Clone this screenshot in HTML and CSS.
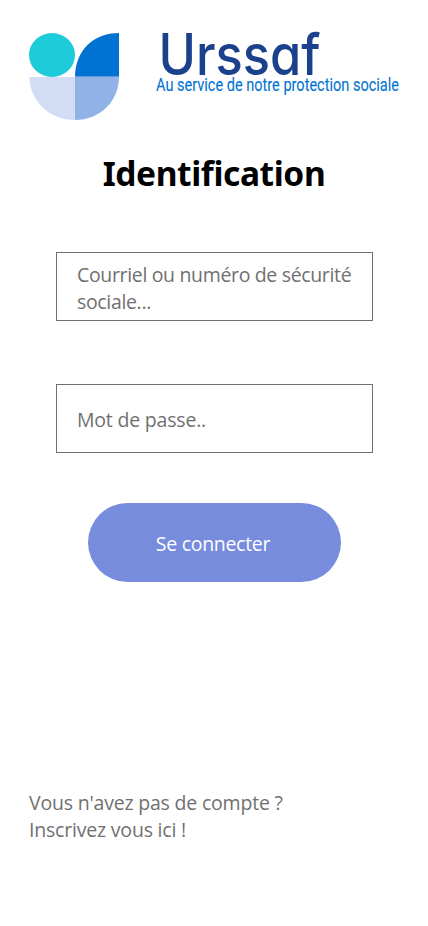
FILE: index.html
```html
<!DOCTYPE html>
<html lang="fr">
<head>
<meta charset="utf-8">
<meta name="viewport" content="width=device-width, initial-scale=1">
<title>Urssaf - Identification</title>
<link rel="stylesheet" href="styles.css">
</head>
<body>
<main class="screen">
  <header class="brand">
    <svg class="mark" viewBox="0 0 90 87" preserveAspectRatio="none" aria-hidden="true">
      <ellipse cx="23" cy="22" rx="23" ry="22" fill="#1dccd8"/>
      <path d="M90 0V44H46C46 18 64 0 90 0Z" fill="#0072d2"/>
      <path d="M.5 44H46V87C20 87 1 68 .5 44Z" fill="#d2ddf5"/>
      <path d="M46 44H90C90 68 71 87 46 87Z" fill="#91b2e6"/>
      <path d="M46 43.5H90" stroke="#5d9cdc"/>
    </svg>
    <svg class="wordmark" viewBox="0 0 248 74" aria-label="Urssaf">
      <text class="name" x="2.5" y="45" textLength="162" lengthAdjust="spacingAndGlyphs">Urssaf</text>
      <text class="motto" x="0" y="61" textLength="243" lengthAdjust="spacingAndGlyphs">Au service de notre protection sociale</text>
    </svg>
  </header>
  <h1 class="title">Identification</h1>
  <form class="form">
    <div class="field long">Courriel ou numéro de sécurité sociale...</div>
    <div class="field">Mot de passe..</div>
    <button class="submit" type="button">Se connecter</button>
  </form>
  <p class="signup">Vous n'avez pas de compte ?<br>Inscrivez vous ici !</p>
</main>
</body>
</html>
```
FILE: styles.css
```css
* { box-sizing: border-box; }
body { margin: 0; background: #fff; font: 19.5px/27px "Open Sans", "Noto Sans", sans-serif; letter-spacing: -.2px; }
.screen { width: 428px; height: 926px; overflow: hidden; }
.brand { display: flex; gap: 37px; padding: 33px 0 0 29px; height: 120px; }
.mark { display: block; flex: none; width: 90px; height: 87px; }
.wordmark { display: block; flex: none; width: 248px; height: 74px; margin-top: -3px; overflow: visible; letter-spacing: 0; }
.name { font: 450 57px Inter, sans-serif; font-feature-settings: "cv11" 1; fill: #1b418c; }
.motto { font: 400 19px Roboto, sans-serif; fill: #0072d2; stroke: #0072d2; stroke-width: .1px; }
.title { margin: 29px 0 0; height: 49px; font: 700 33.5px/48px "Noto Sans", sans-serif; letter-spacing: -.4px; color: #000; text-align: center; white-space: nowrap; }
.form { display: flex; flex-direction: column; align-items: center; padding: 54px 0 0; }
.field { display: flex; align-items: center; width: 317px; height: 69px; margin: 0 0 63px 1px; padding: 2px 15px 0 20px; border: 1px solid #707070; color: #707070; }
.long { letter-spacing: -.34px; }
.submit { width: 253px; height: 79px; margin: -13px 0 0 1px; padding: 2px 3px 0 0; border: 0; border-radius: 40px; background: #788cde; color: #fff; font: inherit; letter-spacing: -.3px; }
.signup { margin: 207px 0 0 29px; color: #707070; }
```
